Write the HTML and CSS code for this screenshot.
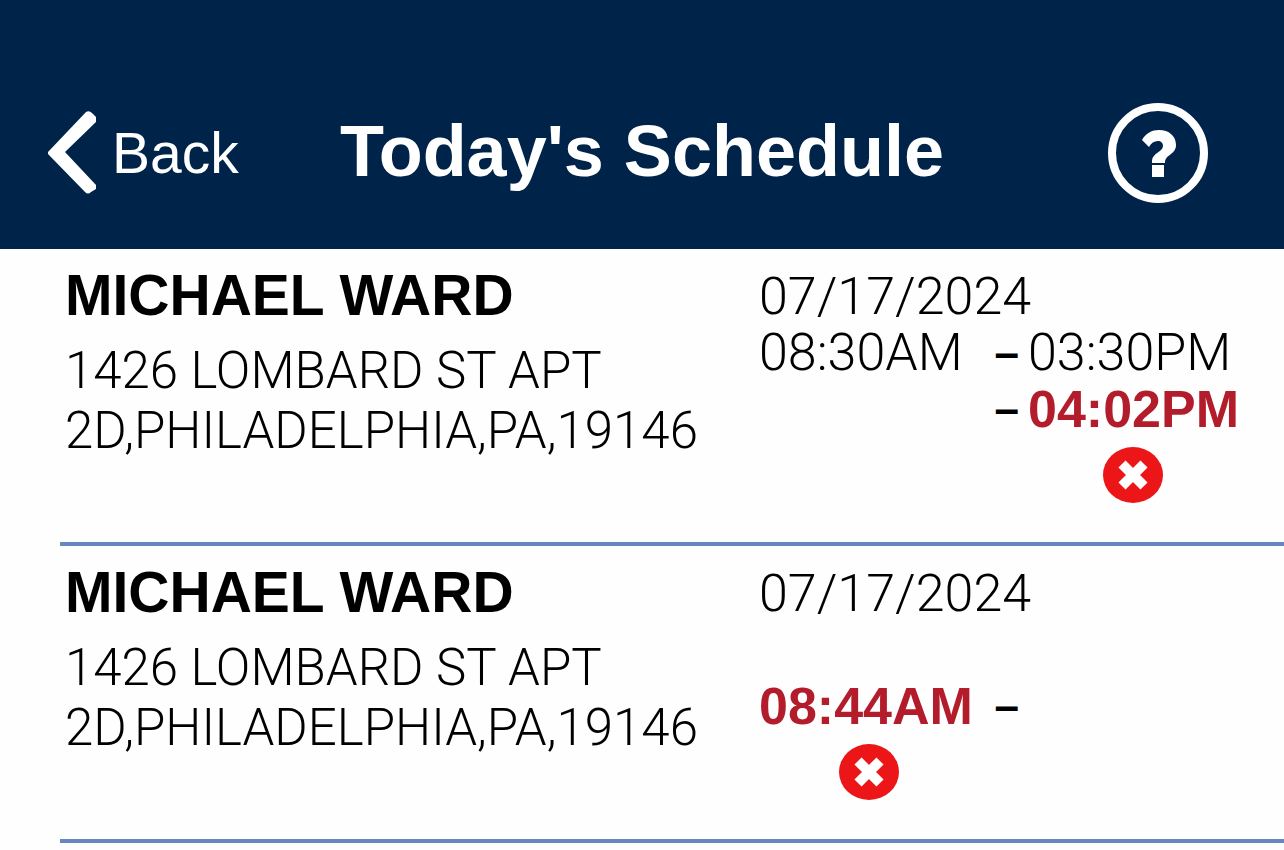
FILE: index.html
```html
<!DOCTYPE html>
<html lang="en">

<head>
  <meta charset="UTF-8">
  <meta name="viewport" content="width=device-width, initial-scale=1.0">
  <title>Today's Schedule</title>
  <link rel="stylesheet" href="styles.css">
</head>

<body>
  <header class="topbar">
    <a class="back" href="#">
      <svg class="back-icon" viewBox="0 0 48 84" aria-hidden="true">
        <path d="M0 41L38 1Q41 -1 44 2L48 6V11L17 41L48 74V78L43 81Q40 84 37 81L0 43Z" fill="#fff" />
      </svg>
      <span>Back</span>
    </a>
    <h1 class="title">Today's Schedule</h1>
    <button class="help" type="button" aria-label="Help">
      <svg viewBox="0 0 100 100" aria-hidden="true">
        <circle cx="50" cy="50" r="46" fill="none" stroke="#fff" stroke-width="8" />
        <path d="M34 37C38 30 44 27 51 27C61 27 68 33 68 42C68 52 57 51 57 60H44V58C44 50 55 49 55 43C55 40 53 38 50 38C46 38 43 40 41 44Z" fill="#fff" />
        <rect x="44" y="62" width="12" height="12" fill="#fff" />
      </svg>
    </button>
  </header>

  <main>
    <ul class="visits">
      <li class="visit">
        <div class="client">
          <h2 class="name">MICHAEL WARD</h2>
          <p class="address">1426 LOMBARD ST APT<br>2D,PHILADELPHIA,PA,19146</p>
        </div>
        <div class="times">
          <span class="date">07/17/2024</span>
          <span class="start">08:30AM</span>
          <span class="dash">–</span>
          <span class="end">03:30PM</span>
          <span class="dash actual">–</span>
          <span class="end actual">04:02PM</span>
          <svg class="end status" viewBox="0 0 60 58" role="img" aria-label="Not verified">
            <ellipse cx="30" cy="29" rx="30" ry="28" fill="#ec1518" />
            <path d="M19 18L41 40M41 18L19 40" stroke="#fff" stroke-width="10" />
          </svg>
        </div>
      </li>
      <li class="visit">
        <div class="client">
          <h2 class="name">MICHAEL WARD</h2>
          <p class="address">1426 LOMBARD ST APT<br>2D,PHILADELPHIA,PA,19146</p>
        </div>
        <div class="times">
          <span class="date">07/17/2024</span>
          <span class="start actual">08:44AM</span>
          <span class="dash actual">–</span>
          <svg class="start status" viewBox="0 0 60 58" role="img" aria-label="Not verified">
            <ellipse cx="30" cy="29" rx="30" ry="28" fill="#ec1518" />
            <path d="M19 18L41 40M41 18L19 40" stroke="#fff" stroke-width="10" />
          </svg>
        </div>
      </li>
    </ul>
  </main>
</body>

</html>
```

FILE: styles.css
```css
* {
  padding: 0;
  margin: 0;
  box-sizing: border-box;
}

body {
  background: #fefefe;
  color: #000;
  font-family: "Liberation Sans", Arial, sans-serif;
}

.topbar {
  display: grid;
  grid-template-columns: 1fr auto 1fr;
  align-items: center;
  padding: 103px 48px 46px;
  background: #002349;
  color: #fff;
}

.back {
  display: flex;
  align-items: center;
  gap: 16px;
  color: #fff;
  font-size: 57px;
  text-decoration: none;
}

.back-icon {
  width: 48px;
  height: 84px;
}

.title {
  padding-bottom: 4px;
  font-size: 72px;
  line-height: 84px;
}

.help {
  justify-self: end;
  width: 100px;
  height: 100px;
  margin-right: 28px;
  border: 0;
  background: none;
  cursor: pointer;
}

.help svg {
  display: block;
}

.visits {
  list-style: none;
  padding-left: 60px;
}

.visit {
  display: grid;
  grid-template-columns: 694fr 525fr;
  padding: 20px 0 29px 5px;
  border-bottom: 4px solid #6788bf;
}

.name {
  font-size: 57px;
  line-height: 52px;
}

.address {
  margin-top: 20px;
  font-family: Roboto, "Liberation Sans", sans-serif;
  font-size: 51px;
  font-weight: 300;
  line-height: 60px;
  white-space: nowrap;
}

.times {
  display: grid;
  grid-template-columns: 219px 50px 210px;
  grid-template-rows: repeat(3, 56px) 76px;
  align-items: center;
  font-family: Roboto, "Liberation Sans", sans-serif;
  font-size: 52px;
  font-weight: 300;
  line-height: 56px;
}

.date {
  grid-area: 1 / 1 / 2 / 4;
}

.start {
  grid-area: 2 / 1;
}

.dash {
  grid-area: 2 / 2;
  justify-self: end;
  padding-right: 9px;
  font-family: "Liberation Sans", Arial, sans-serif;
  font-size: 44px;
  font-weight: bold;
}

.end {
  grid-area: 2 / 3;
}

/* clocked times sit below the planned ones */
.actual {
  grid-row: 3;
}

.start.actual,
.end.actual {
  color: #b31c2b;
  font-family: "Liberation Sans", Arial, sans-serif;
  font-weight: bold;
}

.status {
  grid-row: 4;
  justify-self: center;
  width: 60px;
  height: 58px;
}
```
